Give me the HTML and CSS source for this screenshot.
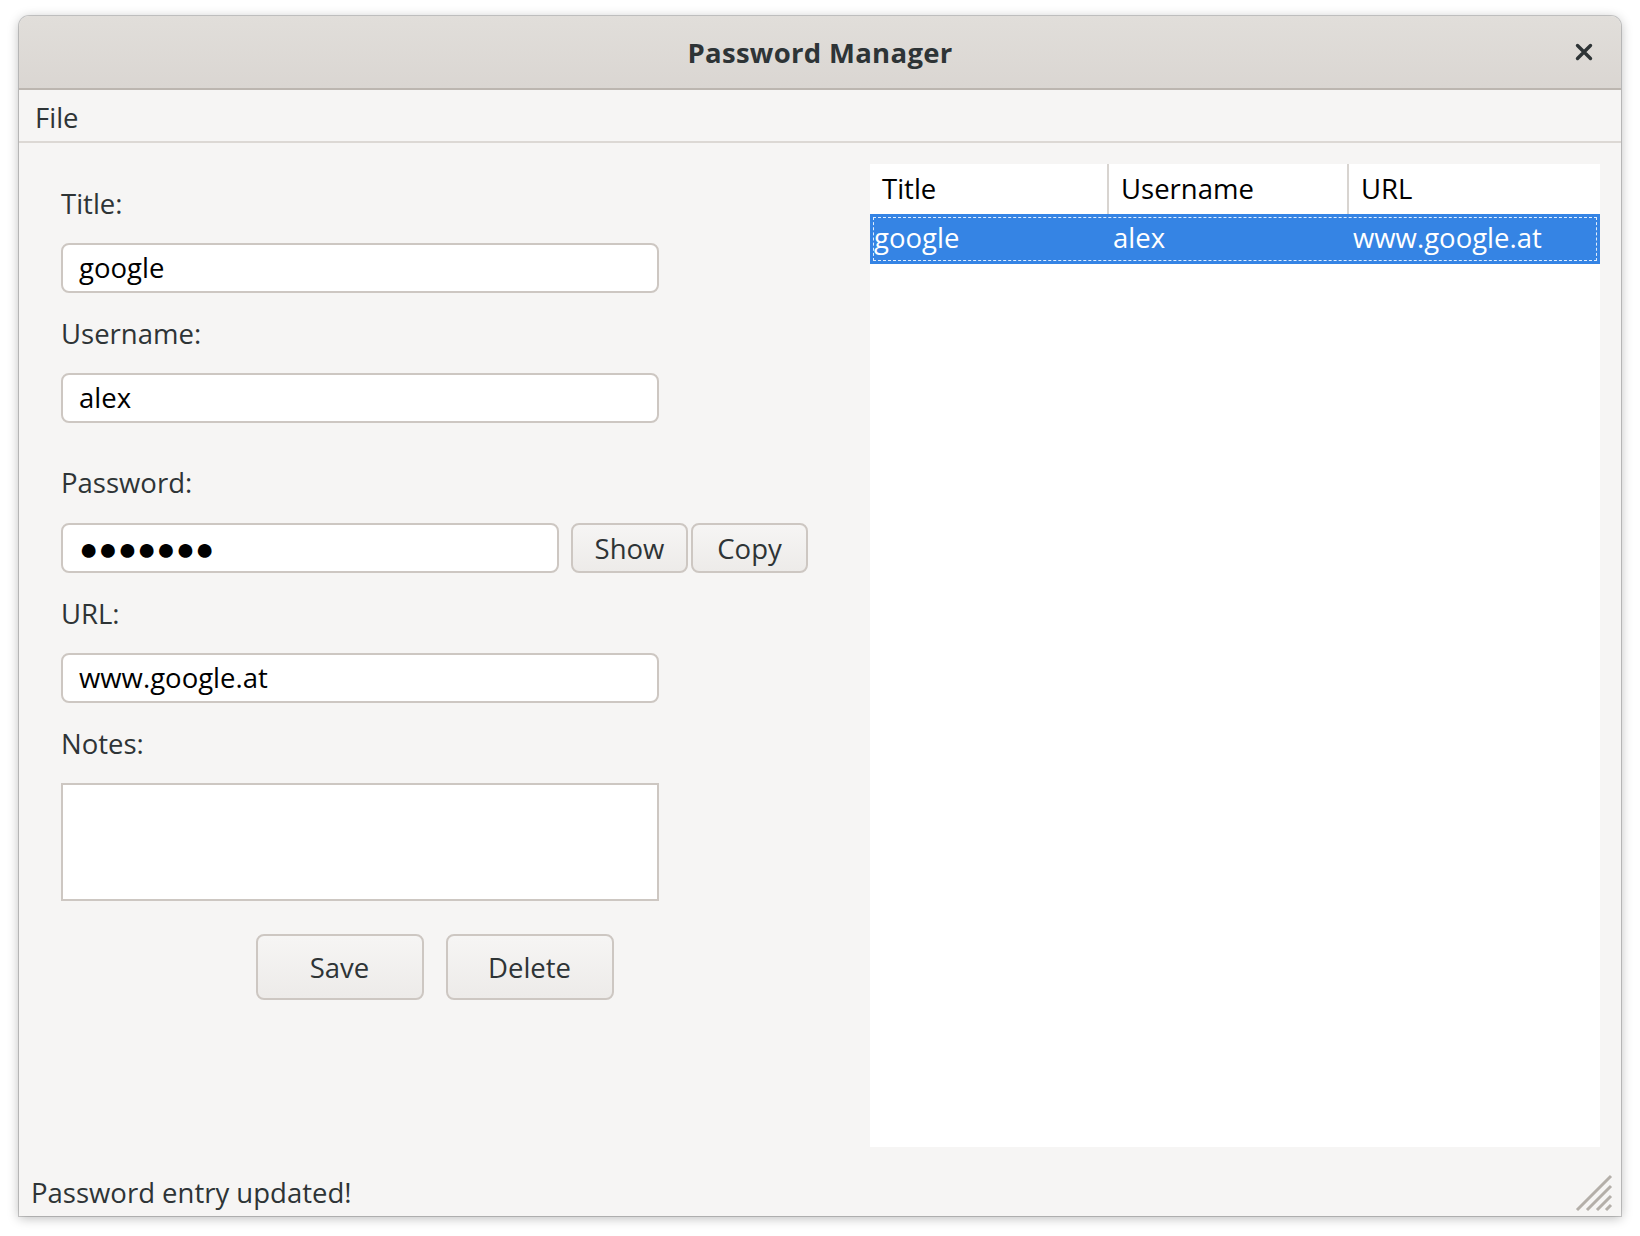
FILE: index.html
```html
<!DOCTYPE html>
<html>
<head>
<meta charset="utf-8">
<title>Password Manager</title>
<link rel="stylesheet" href="styles.css">
</head>
<body>
<div class="window">
  <div class="titlebar">
    <div class="title">Password Manager</div>
    <div class="close">
      <svg width="18" height="18" viewBox="0 0 18 18"><path d="M2.5 2.5 L15.5 15.5 M15.5 2.5 L2.5 15.5" stroke="#2e3436" stroke-width="3.4" stroke-linecap="round"/></svg>
    </div>
  </div>
  <div class="menubar"><span class="menu-item">File</span></div>
  <div class="content">
    <div class="form">
      <div class="label first">Title:</div>
      <div class="entry">google</div>
      <div class="label">Username:</div>
      <div class="entry">alex</div>
      <div class="label gap">Password:</div>
      <div class="pw-row">
        <div class="entry pw">●●●●●●●</div>
        <div class="btn small">Show</div>
        <div class="btn small tight">Copy</div>
      </div>
      <div class="label">URL:</div>
      <div class="entry">www.google.at</div>
      <div class="label">Notes:</div>
      <div class="notes"></div>
      <div class="actions">
        <div class="btn big">Save</div>
        <div class="btn big">Delete</div>
      </div>
    </div>
    <div class="tree">
      <div class="tree-head">
        <div class="col c1">Title</div>
        <div class="col c2">Username</div>
        <div class="col c3">URL</div>
      </div>
      <div class="tree-row selected">
        <div class="cell c1">google</div>
        <div class="cell c2">alex</div>
        <div class="cell c3">www.google.at</div>
      </div>
    </div>
  </div>
  <div class="status">
    <span class="status-text">Password entry updated!</span>
    <svg class="grip" width="40" height="40" viewBox="0 0 40 40">
      <path d="M38 4 L4 38 M38 14 L14 38 M38 24 L24 38 M38 33 L33 38" stroke="#b4afa9" stroke-width="3"/>
    </svg>
  </div>
</div>
</body>
</html>
```
FILE: styles.css
```css
html, body {
  margin: 0;
  padding: 0;
  background: #ffffff;
}
body {
  width: 1640px;
  height: 1236px;
  overflow: hidden;
  font-family: "Open Sans", "Noto Sans", sans-serif;
  color: #2e3436;
}
.window {
  margin: 16px 0 0 19px;
  width: 1602px;
  height: 1200px;
  border-radius: 10px 10px 0 0;
  background: #f6f5f4;
  box-shadow: 0 2px 12px rgba(0,0,0,0.28), 0 0 0 1px rgba(0,0,0,0.18);
  display: flex;
  flex-direction: column;
  overflow: hidden;
}
.titlebar {
  height: 72px;
  flex: none;
  background: linear-gradient(#e1deda, #dad6d2);
  border-bottom: 2px solid #bcb6b0;
  display: flex;
  align-items: center;
  justify-content: center;
  position: relative;
}
.title {
  font-weight: 700;
  font-size: 27.5px;
  letter-spacing: 0.3px;
  color: #2e3436;
  margin-top: 1px;
}
.close {
  position: absolute;
  right: 28px;
  top: 27px;
  width: 18px;
  height: 18px;
}
.menubar {
  height: 51px;
  flex: none;
  border-bottom: 2px solid #dcd8d4;
  display: flex;
  align-items: center;
  padding-left: 16px;
}
.menu-item {
  font-size: 27.5px;
  color: #2e3436;
  margin-top: 3px;
}
.content {
  flex: 1;
  display: flex;
  padding: 21px 21px 0 42px;
  min-height: 0;
}
.form {
  width: 747px;
  flex: none;
  display: flex;
  flex-direction: column;
}
.label {
  height: 40px;
  line-height: 40px;
  font-size: 27.5px;
  color: #2e3436;
  margin-top: 21px;
  margin-bottom: 19px;
}
.label.first {
  margin-top: 20px;
}
.label.gap {
  margin-top: 40px;
  margin-bottom: 20px;
}
.entry {
  width: 598px;
  height: 50px;
  box-sizing: border-box;
  border: 2px solid #cdc7c2;
  border-radius: 8px;
  background: #ffffff;
  font-size: 27.5px;
  line-height: 46px;
  padding-left: 16px;
  color: #000000;
}
.pw-row {
  display: flex;
  align-items: center;
}
.entry.pw {
  width: 498px;
  font-size: 32px;
  letter-spacing: 0px;
  padding-left: 16px;
}
.btn {
  box-sizing: border-box;
  border: 2px solid #cdc7c2;
  border-radius: 8px;
  background: linear-gradient(#f6f5f4, #edebe9);
  color: #2e3436;
  font-size: 27.5px;
  display: flex;
  align-items: center;
  justify-content: center;
}
.btn.small {
  width: 117px;
  height: 50px;
  margin-left: 12px;
}
.btn.small.tight {
  margin-left: 3px;
}
.notes {
  width: 598px;
  height: 118px;
  box-sizing: border-box;
  border: 2px solid #cdc7c2;
  background: #ffffff;
}
.actions {
  display: flex;
  justify-content: center;
  gap: 22px;
  margin-top: 33px;
}
.btn.big {
  width: 168px;
  height: 66px;
}
.tree {
  margin-left: 62px;
  width: 730px;
  height: 983px;
  background: #ffffff;
  flex: none;
}
.tree-head {
  display: flex;
  height: 50px;
}
.col {
  box-sizing: border-box;
  height: 50px;
  line-height: 50px;
  font-size: 27.5px;
  color: #000000;
  padding-left: 12px;
}
.col.c1, .col.c2 {
  border-right: 2px solid #d8d4d0;
}
.c1 { width: 239px; }
.c2 { width: 240px; }
.c3 { width: 251px; }
.tree-row {
  display: flex;
  height: 50px;
  box-sizing: border-box;
}
.tree-row.selected {
  background: #3584e4;
  color: #ffffff;
  outline: 1px dashed rgba(255,255,255,0.85);
  outline-offset: -4px;
}
.cell {
  box-sizing: border-box;
  line-height: 48px;
  font-size: 27.5px;
  padding-left: 4px;
}
.status {
  height: 69px;
  flex: none;
  display: flex;
  align-items: center;
  justify-content: space-between;
  padding-left: 12px;
  padding-right: 8px;
  position: relative;
}
.status-text {
  font-size: 27.5px;
  color: #2e3436;
  margin-top: 22px;
}
.grip {
  align-self: flex-end;
  margin-bottom: 4px;
}
```
